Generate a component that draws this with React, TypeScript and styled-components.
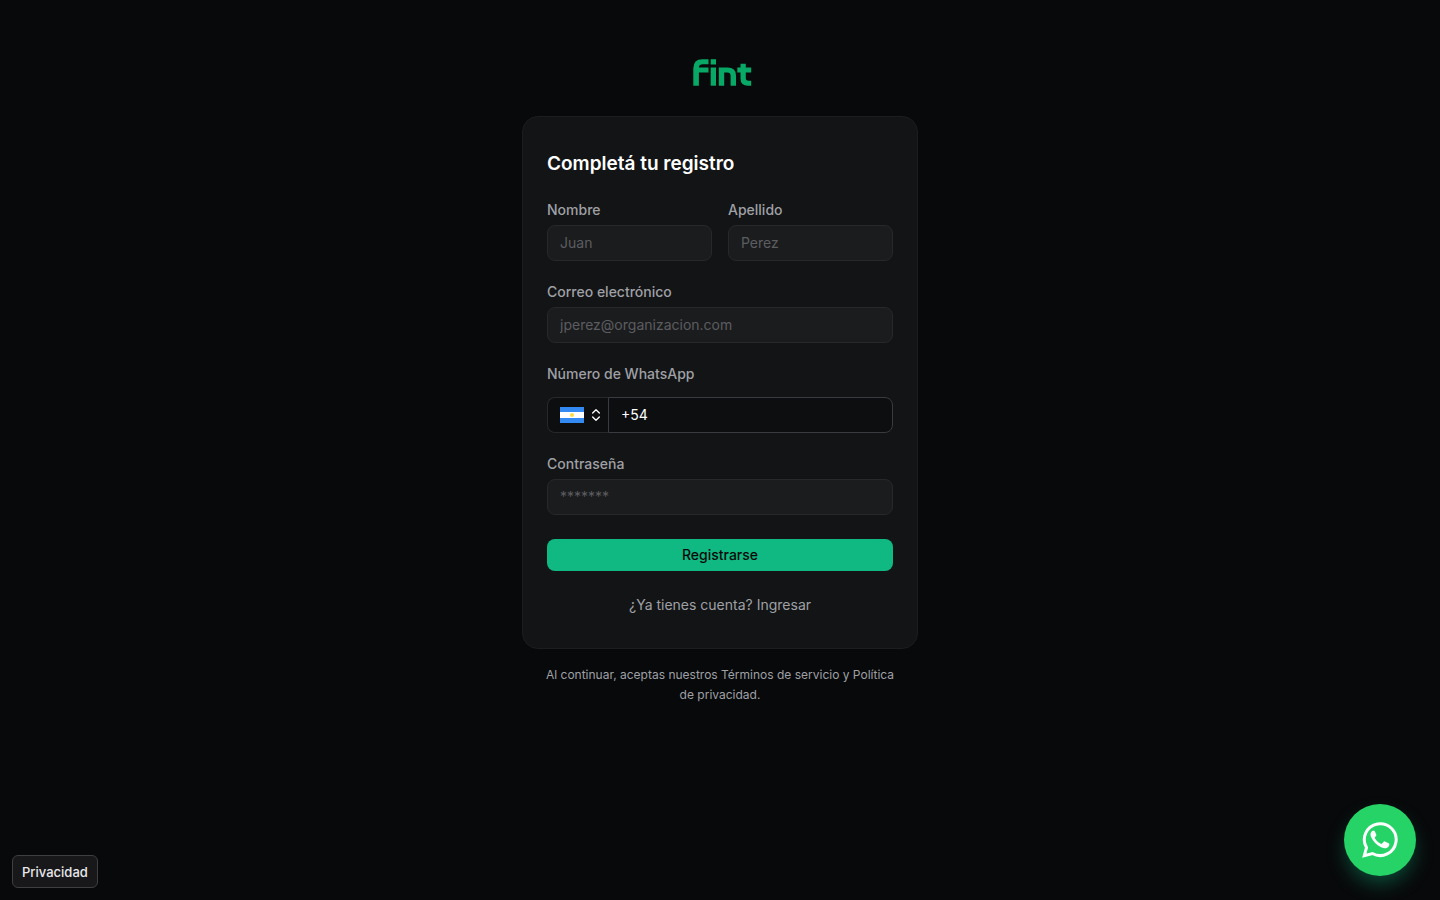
import React from "react";
import styled, { createGlobalStyle } from "styled-components";
import { ChevronsUpDown } from "lucide-react";

const GlobalStyle = createGlobalStyle`
  *, *::before, *::after { box-sizing: border-box; }
  html { background: #08090a; }
  body {
    margin: 0;
    background: #08090a;
    color: #ffffff;
    font-family: Inter, "Liberation Sans", sans-serif;
    font-size: 14px;
    line-height: 20px;
    -webkit-font-smoothing: antialiased;
  }
  button, input, select { font: inherit; color: inherit; }
  a { color: inherit; text-decoration: none; }
`;

const Page = styled.main`
  min-height: 100vh;
  display: flex;
  flex-direction: column;
  align-items: center;
  padding: 58px 16px 32px;
`;

const Logo = styled.svg`
  display: block;
  width: 60px;
  height: 28px;
  margin: 0 0 30px 4px;
`;

const Card = styled.form`
  width: 100%;
  max-width: 396px;
  display: flex;
  flex-direction: column;
  gap: 20px;
  padding: 32px 24px 33px;
  border: 1px solid #1c1d1f;
  border-radius: 16px;
  background: #131415;
`;

const Title = styled.h1`
  margin: 0;
  font-size: 19px;
  line-height: 30px;
  font-weight: 600;
`;

const Row = styled.div`
  display: grid;
  grid-template-columns: 1fr 1fr;
  gap: 16px;
`;

const Field = styled.div<{ $gap?: number }>`
  display: flex;
  flex-direction: column;
  gap: ${(p) => p.$gap ?? 4}px;
  min-width: 0;
`;

const Label = styled.label`
  line-height: 22px;
  font-weight: 500;
  color: #9fa0a6;
`;

const Input = styled.input`
  width: 100%;
  height: 36px;
  padding: 0 12px 2px;
  border: 1px solid #27282a;
  border-radius: 8px;
  background: #1b1c1d;
  outline: none;
  &::placeholder { color: #5c5d61; opacity: 1; }
`;

const PhoneGroup = styled.div`
  display: flex;
  height: 36px;
`;

const Country = styled.button`
  display: flex;
  align-items: center;
  gap: 4px;
  width: 61px;
  padding: 0 4px 0 12px;
  border: 1px solid #27282a;
  border-right: 0;
  border-radius: 8px 0 0 8px;
  background: #0d0e10;
  color: #ffffff;
  flex-shrink: 0;
  svg { flex-shrink: 0; }
`;

const PhoneInput = styled.input`
  flex: 1;
  min-width: 0;
  padding: 0 12px;
  border: 1px solid #3a3b40;
  border-radius: 0 8px 8px 0;
  background: #0d0e10;
  outline: none;
`;

const Submit = styled.button`
  height: 32px;
  margin-top: 4px;
  border: 0;
  border-radius: 8px;
  background: #10b981;
  color: #08090a;
  font-weight: 500;
  cursor: pointer;
`;

const Login = styled.p`
  margin: 4px 0 0;
  text-align: center;
  color: #9fa0a6;
`;

const Legal = styled.p`
  width: 100%;
  max-width: 396px;
  margin: 16px 0 0;
  padding: 0 16px;
  font-size: 12px;
  text-align: center;
  color: #9fa0a6;
`;

const Privacy = styled.button`
  position: fixed;
  left: 12px;
  bottom: 12px;
  height: 33px;
  padding: 0 9px;
  border: 1px solid #3f3f43;
  border-radius: 6px;
  background: #18181b;
  color: #e8e8ea;
  font-size: 13px;
  font-weight: 500;
  cursor: pointer;
`;

const Chat = styled.a`
  position: fixed;
  right: 24px;
  bottom: 24px;
  display: flex;
  align-items: center;
  justify-content: center;
  width: 72px;
  height: 72px;
  border-radius: 50%;
  background: #25d366;
  color: #ffffff;
  box-shadow: 0 10px 20px -3px rgba(16, 185, 129, 0.4);
`;

const FintLogo = () => (
  <Logo viewBox="0 0 60 28" role="img" aria-label="fint" fill="#08a866">
    <path d="M1.300 27.700V10.500Q1.300 1.200 10.300 1.200H16.500V6.300H11Q7 6.300 6.900 9.500H16.500V14.600H6.900V27.700Z" />
    <rect x="18.700" y="1.200" width="5.300" height="5.300" />
    <rect x="18.700" y="9.500" width="5.300" height="18.200" />
    <path d="M26.800 27.700V9.500H35.500Q44 9.500 44 17.500V27.700H38.600V18Q38.600 14.600 35.300 14.600H32.200V27.700Z" />
    <path d="M48.500 5.800H53.800V9.500H59.200V14.600H53.800V20Q53.800 22.700 56.500 22.700H59.200V27.700H56Q48.500 27.700 48.500 20.500V14.600H45.300V9.500H48.500Z" />
  </Logo>
);

const Flag = () => (
  <svg width="24" height="16" viewBox="0 0 24 16" aria-hidden="true">
    <rect width="24" height="16" fill="#338af3" />
    <rect y="5" width="24" height="6" fill="#ffffff" />
    <circle cx="12" cy="8" r="2" fill="#ffda44" />
  </svg>
);

const WhatsAppIcon = () => (
  <svg width="36" height="36" viewBox="0 0 36 36" fill="none" aria-hidden="true">
    <path
      d="M2.300 33.700L4.500 25.600A15.900 15.900 0 1 1 10.500 31.500Z"
      stroke="currentColor"
      strokeWidth="3"
      strokeLinejoin="miter"
    />
    <path
      d="M12.900 9.500C12.500 8.700 12.200 8.700 11.600 8.700C10.700 8.700 9.800 9.100 9.200 10C8.300 11.200 8.200 13.400 9.300 15.500C11.300 19.500 14.900 23.300 19.200 25.300C21.800 26.500 23.500 26.500 25.100 25.700C26.800 24.800 27.300 23.500 27.300 22.200C27.300 21.700 27.200 21.500 26.700 21.200L22.900 19.400C22.400 19.200 22 19.300 21.700 19.700L20.100 21.600C19.800 22 19.400 22 18.900 21.800C16.300 20.600 14.300 18.700 12.900 16.200C12.700 15.800 12.800 15.400 13.100 15.100L14.200 13.700C14.400 13.400 14.400 13.100 14.300 12.800Z"
      fill="currentColor"
    />
  </svg>
);

export default function App() {
  return (
    <>
      <GlobalStyle />
      <Page>
        <FintLogo />
        <Card onSubmit={(e) => e.preventDefault()}>
          <Title>Completá tu registro</Title>
          <Row>
            <Field>
              <Label htmlFor="nombre">Nombre</Label>
              <Input id="nombre" placeholder="Juan" />
            </Field>
            <Field>
              <Label htmlFor="apellido">Apellido</Label>
              <Input id="apellido" placeholder="Perez" />
            </Field>
          </Row>
          <Field>
            <Label htmlFor="correo">Correo electrónico</Label>
            <Input id="correo" type="email" placeholder="jperez@organizacion.com" />
          </Field>
          <Field $gap={12}>
            <Label htmlFor="telefono">Número de WhatsApp</Label>
            <PhoneGroup>
              <Country type="button" aria-label="Argentina">
                <Flag />
                <ChevronsUpDown size={16} />
              </Country>
              <PhoneInput id="telefono" type="tel" defaultValue="+54" />
            </PhoneGroup>
          </Field>
          <Field>
            <Label htmlFor="clave">Contraseña</Label>
            <Input id="clave" type="password" placeholder="*******" />
          </Field>
          <Submit type="submit">Registrarse</Submit>
          <Login>
            ¿Ya tienes cuenta? <a href="#ingresar">Ingresar</a>
          </Login>
        </Card>
        <Legal>
          Al continuar, aceptas nuestros <a href="#terminos">Términos de servicio</a> y{" "}
          <a href="#privacidad">Política de privacidad</a>.
        </Legal>
      </Page>
      <Privacy type="button">Privacidad</Privacy>
      <Chat href="#whatsapp" aria-label="WhatsApp">
        <WhatsAppIcon />
      </Chat>
    </>
  );
}
